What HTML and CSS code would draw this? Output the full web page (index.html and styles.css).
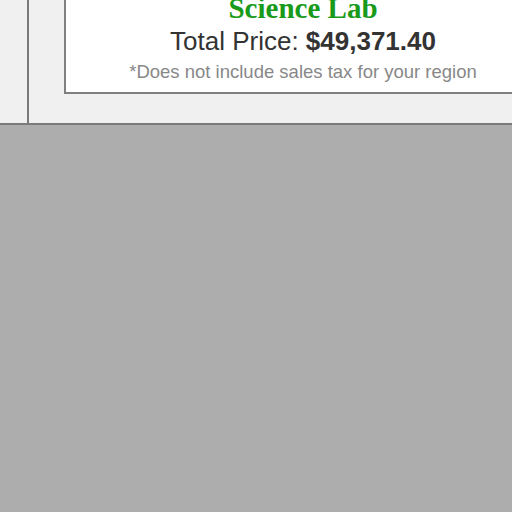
FILE: index.html
```html
<!DOCTYPE html>
<html>
<head>
<meta charset="utf-8">
<link rel="stylesheet" href="styles.css">
</head>
<body>
<div class="panel">
  <div class="rail"></div>
  <div class="content">
    <div class="summary">
      <div class="title">Science Lab</div>
      <div class="total">Total Price: <b>$49,371.40</b></div>
      <div class="note">*Does not include sales tax for your region</div>
    </div>
  </div>
</div>
</body>
</html>
```

FILE: styles.css
```css
html, body {
  margin: 0;
  padding: 0;
  background: #adadad;
  height: 100%;
}
.panel {
  display: flex;
  height: 123px;
  background: #f0f0f0;
  border-bottom: 2px solid #7a7a7a;
  overflow: hidden;
}
.rail {
  width: 27px;
  flex: none;
  border-right: 2px solid #7a7a7a;
}
.content {
  flex: 1;
  padding-left: 35px;
  overflow: hidden;
}
.summary {
  width: 474px;
  margin-top: -8px;
  background: #fff;
  border: 2px solid #808080;
  border-top: none;
  text-align: center;
  padding-bottom: 7px;
}
.title {
  font-family: "Liberation Serif", serif;
  font-weight: bold;
  font-size: 29px;
  color: #1a9a1a;
  line-height: 32px;
}
.total {
  font-family: "Liberation Sans", Arial, sans-serif;
  font-size: 26px;
  color: #333;
  line-height: 32px;
  margin-top: 1px;
}
.total b {
  font-weight: bold;
}
.note {
  font-family: "Liberation Sans", Arial, sans-serif;
  font-size: 18.5px;
  color: #888;
  line-height: 26px;
  margin-top: 2px;
}
```
